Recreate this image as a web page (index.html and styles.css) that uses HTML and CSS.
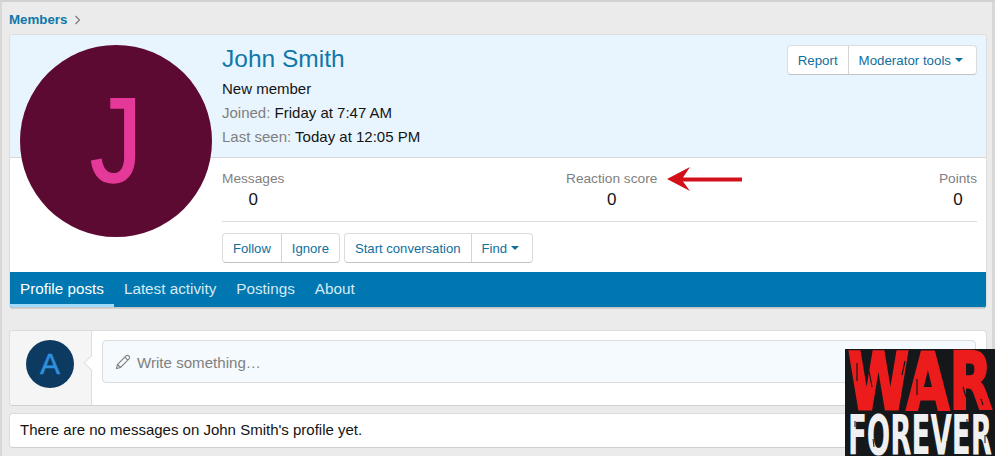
FILE: index.html
```html
<!DOCTYPE html>
<html lang="en">
<head>
  <meta charset="UTF-8">
  <title>John Smith | Members</title>
  <link rel="stylesheet" href="styles.css">
</head>
<body>
  <!-- Breadcrumb -->
  <div class="breadcrumb"><a class="crumb">Members</a><svg class="crumb-arrow" width="7" height="10" viewBox="0 0 7 10"><path d="M1.500 1l4 4-4 4" fill="none" stroke="#777" stroke-width="1.100"/></svg></div>

  <!-- Member Card -->
  <div class="card member">
    <div class="avatar-big"><span class="avatar-letter">J</span></div>
    <div class="member-head">
      <div class="member-info">
        <h1>John Smith</h1>
        <div class="line">New member</div>
        <div class="line"><span class="muted">Joined:</span> Friday at 7:47 AM</div>
        <div class="line"><span class="muted">Last seen:</span> Today at 12:05 PM</div>
      </div>
      <div class="btn-group">
        <a class="btn">Report</a>
        <a class="btn btn-menu">Moderator tools<i class="caret"></i></a>
      </div>
    </div>
    <div class="member-body">
      <div class="stats">
        <div class="stat"><span class="muted">Messages</span><b>0</b></div>
        <div class="stat"><span class="muted">Reaction score</span><b>0</b>
          <svg class="arrow" width="75" height="24" viewBox="0 0 75 24"><path d="M0 12L23 0l-7 10.500h59v4H16l7 9.500z" fill="#d2101a"/></svg>
        </div>
        <div class="stat"><span class="muted">Points</span><b>0</b></div>
      </div>
      <div class="actions">
        <div class="btn-group">
          <a class="btn">Follow</a>
          <a class="btn">Ignore</a>
        </div>
        <div class="btn-group">
          <a class="btn">Start conversation</a>
          <a class="btn btn-menu">Find<i class="caret"></i></a>
        </div>
      </div>
    </div>
    <div class="tabs">
      <a class="tab active">Profile posts</a>
      <a class="tab">Latest activity</a>
      <a class="tab">Postings</a>
      <a class="tab">About</a>
    </div>
  </div>

  <!-- Composer -->
  <div class="card composer">
    <div class="composer-side">
      <div class="avatar-small">A</div>
    </div>
    <div class="composer-main">
      <div class="write-box">
        <svg width="16" height="16" viewBox="0 0 16 16"><path d="M1.500 14.500l1-4L11 2a1.800 1.800 0 0 1 2.800 0 1.800 1.800 0 0 1 .2 2.800L5.500 13.500zM2.500 10.500l3 3M9.800 3.200l3 3" fill="none" stroke="#808080" stroke-width="1.100"/></svg>
        <span class="write-text">Write something…</span>
      </div>
    </div>
  </div>

  <!-- Empty Message -->
  <div class="card empty">There are no messages on John Smith's profile yet.</div>

  <!-- Watermark -->
  <svg class="watermark" width="150" height="107" viewBox="0 0 150 107">
    <rect width="150" height="107" fill="#15181a"/>
    <text x="3" y="60" textLength="144" lengthAdjust="spacingAndGlyphs" class="wm-war">WAR</text>
    <text x="3" y="105" textLength="144" lengthAdjust="spacingAndGlyphs" class="wm-forever">FOREVER</text>
    <!-- worn print marks -->
    <path d="M12 14v18M24 22l3 16M32 44l2 9M60 12l-3 14M72 30v16M104 8v20M118 38l3 10M136 50l2 6" stroke="#15181a" stroke-width="1.200" fill="none"/>
    <path d="M10 72v6M28 90l1 8M46 70v10M64 84v9M84 72l1 7M102 92v7M122 70v6M140 86v8" stroke="#15181a" stroke-width="1" fill="none"/>
  </svg>
</body>
</html>
```

FILE: styles.css
```css
/* Global Styles */
* {
  box-sizing: border-box;
}

html, body {
  height: 456px;
  overflow: hidden;
}

body {
  position: relative;
  margin: 0;
  padding: 0 8px 0 9px;
  background: #ebebeb;
  border-top: 2px solid #d2d2d2;
  box-shadow: inset 2px 0 0 #d8d8d8, inset -3px 0 0 #d8d8d8;
  font-family: "Liberation Sans", Arial, sans-serif;
  font-size: 15px;
  color: #141414;
}

/* Breadcrumb */
.breadcrumb {
  display: flex;
  align-items: center;
  gap: 7px;
  height: 32px;
  padding-top: 3px;
}

.crumb {
  font-size: 13.300px;
  font-weight: bold;
  color: #0f78a8;
}

/* Cards */
.card {
  background: #fff;
  border: 1px solid #dcdcdc;
  border-bottom-color: #cfcfcf;
  border-radius: 4px;
}

.member {
  position: relative;
  overflow: hidden;
  height: 275px;
  margin-bottom: 21px;
}

.avatar-big {
  position: absolute;
  left: 10px;
  top: 10px;
  width: 192px;
  height: 192px;
  border-radius: 50%;
  background: #5c0a31;
  color: #e5399a;
  font-size: 120px;
  line-height: 190px;
  text-align: center;
}

.avatar-letter {
  display: inline-block;
  margin-left: -1px;
  transform: scaleX(0.87);
  -webkit-text-stroke: 1.500px #e5399a;
}

/* Member header */
.member-head {
  display: flex;
  justify-content: space-between;
  align-items: flex-start;
  height: 123px;
  padding: 10px 9px 0 212px;
  background: #e9f5fe;
  border-bottom: 1px solid #d8d8d8;
}

h1 {
  margin: 0 0 4px;
  font-size: 24.500px;
  font-weight: normal;
  line-height: 28px;
  color: #0f78a8;
}

.line {
  line-height: 24px;
  height: 24px;
}

.muted {
  color: #7f7f7f;
}

/* Buttons */
.btn-group {
  display: flex;
  background: #fff;
  border: 1px solid #dcdcdc;
  border-bottom-color: #c4c4c4;
  border-radius: 4px;
}

.btn {
  display: flex;
  align-items: center;
  height: 28px;
  padding: 0 10px;
  font-size: 13.300px;
  color: #0f6f9e;
}

.btn + .btn {
  border-left: 1px solid #d4d4d4;
}

.btn-menu {
  padding-right: 13px;
}

.caret {
  width: 0;
  height: 0;
  margin-left: 4px;
  border: 4.500px solid transparent;
  border-top-color: #0f6f9e;
  border-bottom: 0;
}

/* Member body */
.member-body {
  height: 114px;
  padding: 13px 9px 0 212px;
}

.stats {
  display: flex;
  justify-content: space-between;
  height: 51px;
  border-bottom: 1px solid #dedede;
}

.stat {
  position: relative;
  display: flex;
  flex-direction: column;
  align-items: center;
  font-size: 13.700px;
  line-height: 15px;
}

.stat b {
  margin-top: 5px;
  font-size: 17px;
  font-weight: normal;
  line-height: 18px;
}

.arrow {
  position: absolute;
  left: 101px;
  top: -4px;
}

.actions {
  display: flex;
  gap: 4px;
  margin-top: 11px;
}

.actions .btn {
  font-size: 13.100px;
}

/* Tabs */
.tabs {
  display: flex;
  height: 36px;
  background: #0077b0;
  border-bottom: 1px solid #c8c8c8;
}

.tab {
  height: 35px;
  padding: 0 10px;
  font-size: 15.250px;
  line-height: 34px;
  color: #d6eaf5;
}

.tab.active {
  color: #fff;
  border-bottom: 3px solid #9fdcff;
}

/* Composer */
.composer {
  display: flex;
  height: 76px;
  margin-bottom: 7px;
}

.composer-side {
  width: 82px;
  padding: 9px 0 0 16px;
  background: #f5f5f5;
  border-right: 1px solid #dedede;
  border-radius: 4px 0 0 4px;
}

.avatar-small {
  width: 48px;
  height: 48px;
  border-radius: 50%;
  background: #0d3a61;
  color: #2f8fdb;
  font-size: 30px;
  line-height: 48px;
  text-align: center;
  -webkit-text-stroke: 0.500px #2f8fdb;
}

.composer-main {
  position: relative;
  flex: 1;
  padding: 9px 10px;
}

/* notch pointing at the avatar */
.composer-main::before {
  content: "";
  position: absolute;
  left: -6px;
  top: 26px;
  width: 11px;
  height: 11px;
  background: #fff;
  border-left: 1px solid #dedede;
  border-bottom: 1px solid #dedede;
  transform: rotate(45deg);
}

.write-box {
  display: flex;
  align-items: center;
  gap: 6px;
  height: 43px;
  padding: 0 12px;
  background: #f4fafe;
  border: 1px solid #dcdcdc;
  border-radius: 4px;
  font-size: 15.100px;
  color: #808080;
}

.write-text {
  padding-top: 2px;
}

/* Empty message */
.empty {
  height: 35px;
  padding: 0 10px;
  font-size: 15px;
  line-height: 32px;
}

/* Watermark */
.watermark {
  position: absolute;
  right: 0;
  bottom: 0;
}

.wm-war {
  font-family: "DejaVu Sans", sans-serif;
  font-weight: bold;
  font-size: 78px;
  fill: #ec1c1c;
  stroke: #ec1c1c;
  stroke-width: 3px;
}

.wm-forever {
  font-family: "DejaVu Sans", sans-serif;
  font-weight: bold;
  font-size: 55px;
  fill: #f0f0f0;
}
```
